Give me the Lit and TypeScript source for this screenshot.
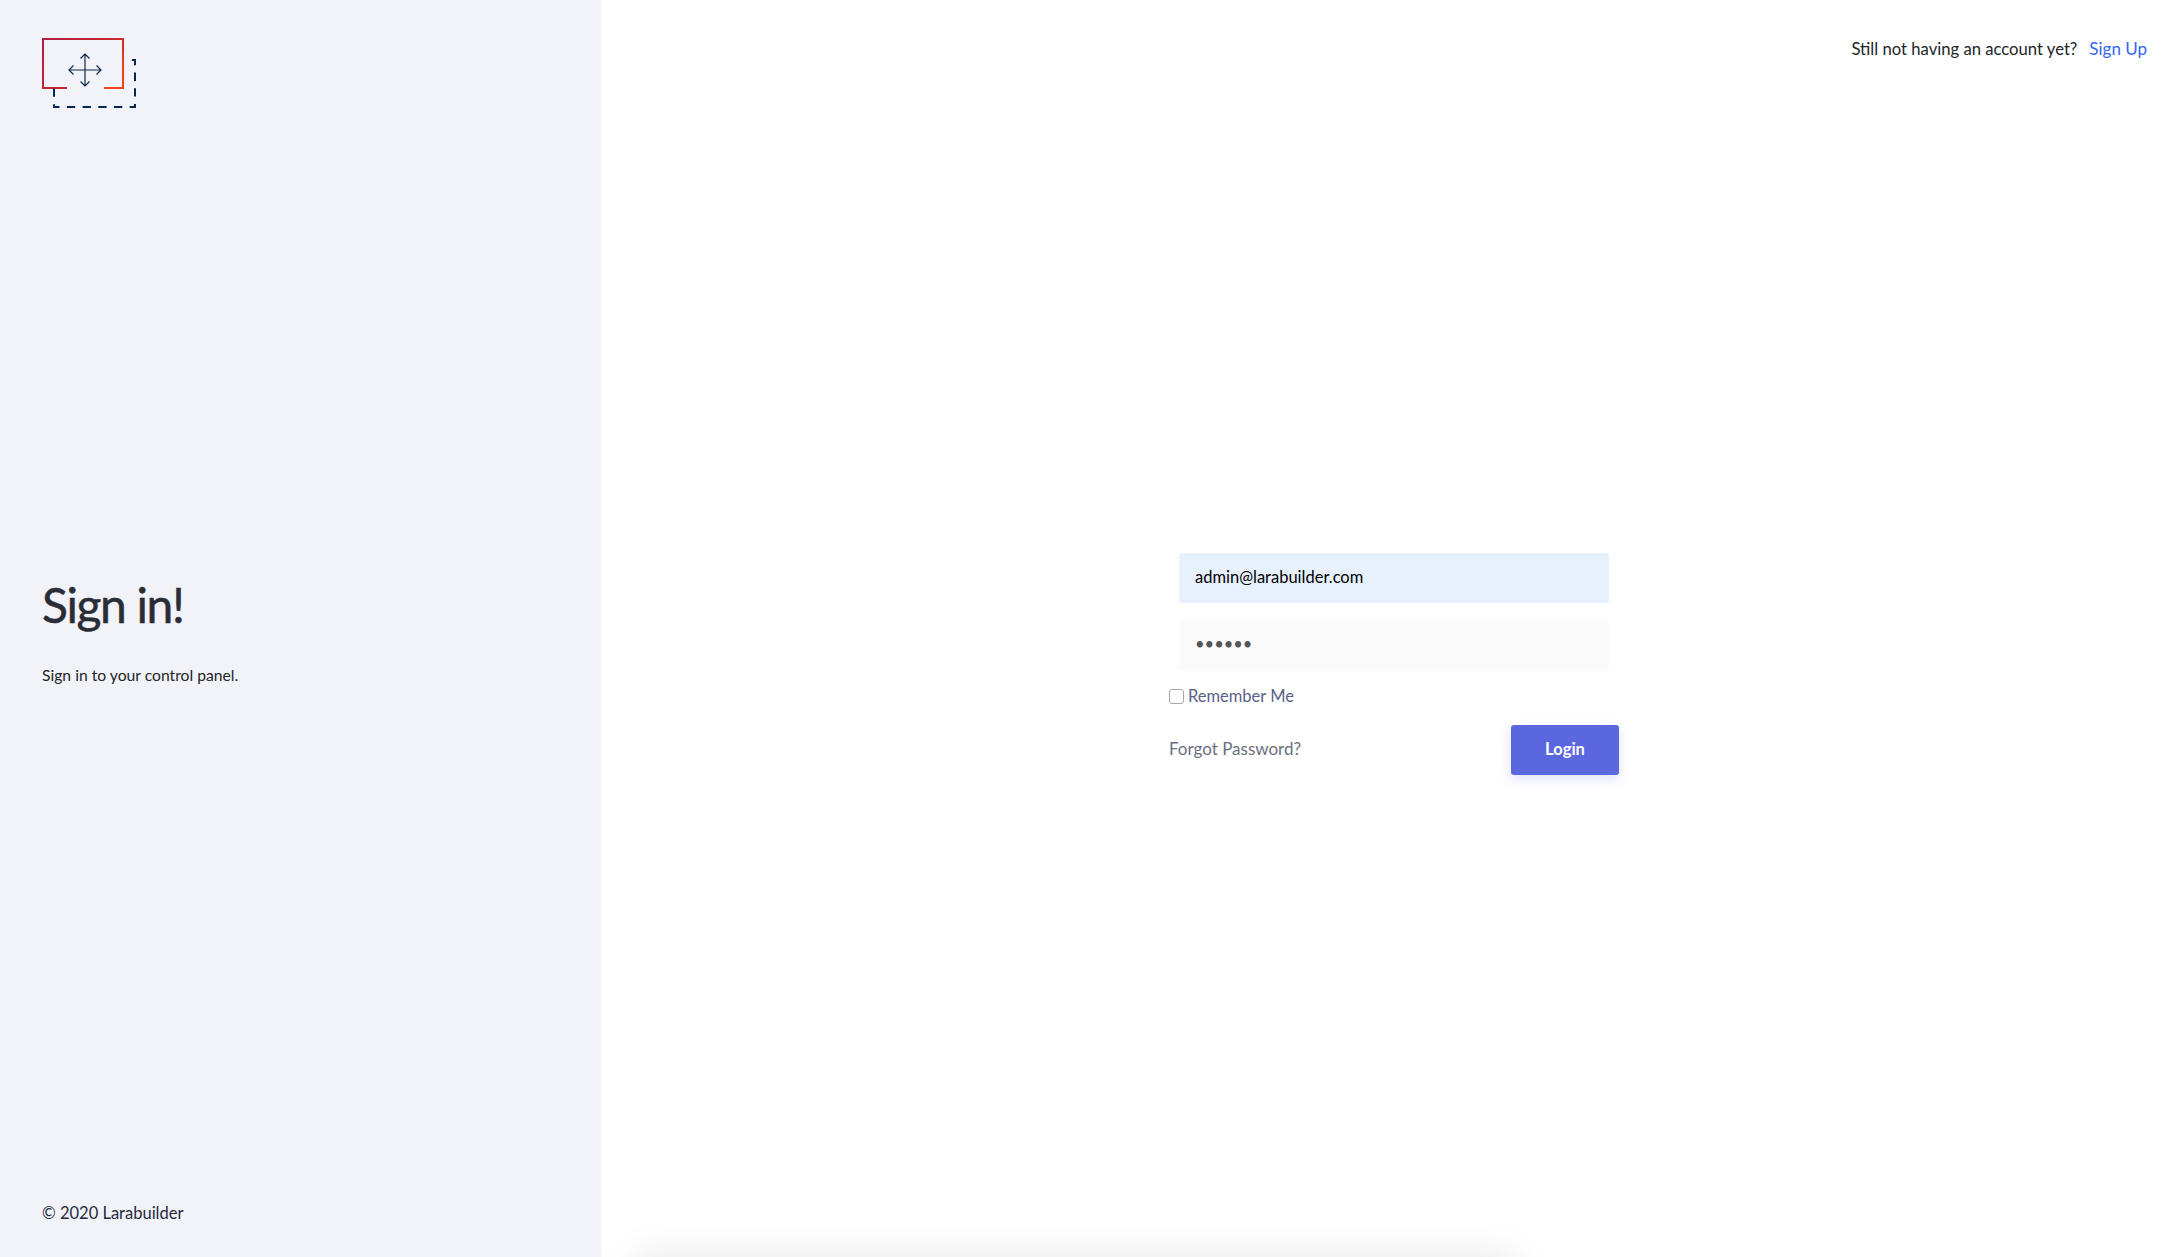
import { LitElement, html, css } from "lit";
import { customElement } from "lit/decorators.js";

@customElement("app-root")
export class AppRoot extends LitElement {
  static styles = css`
    :host { display: flex; width: 100%; height: 100vh; overflow: hidden; background: #fff;
      font-family: "Lato", "Noto Sans", sans-serif; font-size: 16.5px; color: #212529; }
    * { box-sizing: border-box; }
    .side { flex: 0 0 601px; background: #f2f3f8; display: flex; flex-direction: column;
      padding: 38px 42px 34px 42px; }
    .logo { display: block; }
    .intro { margin-top: 465px; }
    h1 { margin: 0; font-size: 48px; line-height: 60px; font-weight: 400; color: #2a2d36; letter-spacing: -1.4px;
      -webkit-text-stroke: 0.5px #2a2d36; }
    .intro p { margin: 30px 0 0; line-height: 20px; font-size: 15.7px; }
    .copy { margin-top: auto; line-height: 20px; color: #262a3d; }
    .main { flex: 1; display: flex; flex-direction: column; position: relative; }
    .top { display: flex; justify-content: flex-end; gap: 12px; padding: 39px 33px 0 0; line-height: 20px; font-size: 16.65px; }
    .top a { color: #3366f0; text-decoration: none; font-size: 17px; }
    .form { width: 450px; margin: 494px 0 0 568px; display: flex; flex-direction: column; }
    .field { width: 430px; height: 50px; margin: 0 0 17px 10px; border: 0; border-radius: 3px; padding: 0 16px 2px;
      font: inherit; color: #000; outline: none; display: block; }
    .email { background: #e7f1fd; }
    .pass { background: #fafafa; color: #555; margin-bottom: 0; }
    .remember { display: flex; align-items: center; gap: 4px; margin-top: 19px; height: 15px; color: #5b6087; line-height: 13px; }
    .remember input { appearance: none; width: 15px; height: 15px; margin: 0; border: 1px solid #a5a7b3; border-radius: 3px; background: #fff; }
    .actions { display: flex; justify-content: space-between; align-items: center; margin-top: 21px; }
    .actions a { color: #6b6f80; text-decoration: none; font-size: 17px; padding-bottom: 3px; }
    button { width: 108px; height: 50px; border: 0; border-radius: 3px; background: #5a67de; color: #fff;
      font: inherit; font-weight: 700; padding: 0 0 2px; box-shadow: 0 4px 12px rgba(90,103,222,.2); }
    .sheet { position: absolute; left: 34px; top: 100%; width: 880px; height: 60px; border-radius: 8px;
      box-shadow: 0 0 40px rgba(0,0,0,.1); }
  `;

  render() {
    return html`
      <aside class="side">
        <svg class="logo" width="100" height="72" viewBox="0 0 100 72" fill="none">
          <defs>
            <linearGradient id="g" x1="0" y1="0" x2="1" y2="0.6">
              <stop offset="0" stop-color="#b01c44" />
              <stop offset="0.75" stop-color="#cf2a2c" />
              <stop offset="1" stop-color="#f2421b" />
            </linearGradient>
          </defs>
          <path d="M25 50H1V1H81V50H62" stroke="url(#g)" stroke-width="2" />
          <path d="M12 50.500V69H93V22H88" stroke="#05264a" stroke-width="2" stroke-dasharray="8.300 7.400" />
          <path d="M43 16V48M27 32H59M38.500 20.500L43 16L47.500 20.500M38.500 43.500L43 48L47.500 43.500M31.500 27.500L27 32L31.500 36.500M54.500 27.500L59 32L54.500 36.500" stroke="#0e2a4d" stroke-width="1.200" />
        </svg>
        <div class="intro">
          <h1>Sign in!</h1>
          <p>Sign in to your control panel.</p>
        </div>
        <div class="copy">© 2020 Larabuilder</div>
      </aside>
      <main class="main">
        <div class="top"><span>Still not having an account yet?</span><a href="#">Sign Up</a></div>
        <form class="form" @submit=${(e: Event) => e.preventDefault()}>
          <input class="field email" type="text" value="admin@larabuilder.com" />
          <input class="field pass" type="password" value="123456" />
          <label class="remember"><input type="checkbox" />Remember Me</label>
          <div class="actions"><a href="#">Forgot Password?</a><button>Login</button></div>
        </form>
        <div class="sheet"></div>
      </main>
    `;
  }
}
